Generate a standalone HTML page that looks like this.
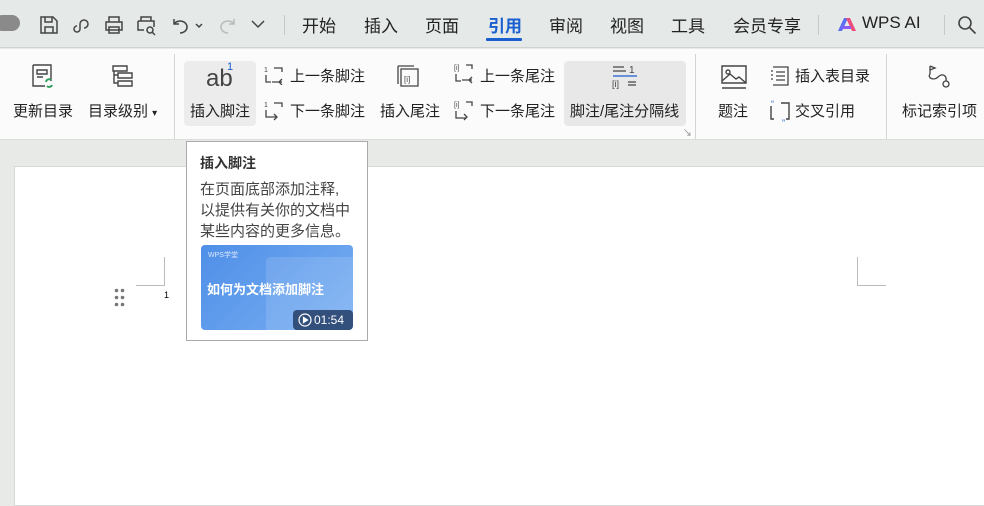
<!DOCTYPE html>
<html><head><meta charset="utf-8"><style>
*{margin:0;padding:0;box-sizing:border-box}
body{width:984px;height:499px;overflow:hidden;background:#e8eae7;font-family:"Liberation Sans","Noto Sans CJK SC",sans-serif;color:#222;position:relative}
.top{position:absolute;left:0;top:0;width:984px;height:48px;background:#e5e9e8;border-bottom:1px solid #cfd3d2}
.rib{position:absolute;left:0;top:49px;width:984px;height:91px;background:#fbfbfb;border-bottom:1px solid #dcdcdc}
.t{position:absolute;font-size:15px;white-space:nowrap}
.s{position:absolute;font-size:15px;white-space:nowrap;color:#222}
.ic{position:absolute}
.vl{position:absolute;width:1px;background:#d4d4d4}
.page{position:absolute;left:14px;top:166px;width:980px;height:340px;background:#fff;border:1px solid #d8d8d8}
</style></head><body>
<div class="top">
 <div style="position:absolute;left:-6px;top:15px;width:26px;height:16px;border-radius:8px;background:#8a8a8a"></div>
 <svg class="ic" style="left:38px;top:14px" width="22" height="22" fill="none" stroke="#444" stroke-width="1.5"><path d="M3 3h12l4 4v12H3z M7 3v5h7V3 M7 19v-6h8v6"/></svg>
 <svg class="ic" style="left:72px;top:14px" width="20" height="22" fill="none" stroke="#444" stroke-width="1.5"><path d="M8 10a4 4 0 1 1 4 4 M8 10v5a3 3 0 1 1-3-3"/></svg>
 <svg class="ic" style="left:103px;top:14px" width="22" height="22" fill="none" stroke="#444" stroke-width="1.5"><path d="M6 8V3h10v5 M3 8h16v8H3z M6 13h10v6H6z"/></svg>
 <svg class="ic" style="left:135px;top:14px" width="22" height="22" fill="none" stroke="#444" stroke-width="1.5"><path d="M6 7V3h10v4 M3 7h16v6 M3 7v9h6"/><circle cx="15" cy="16" r="3"/><path d="M17 18l3 3"/></svg>
 <svg class="ic" style="left:170px;top:14px" width="36" height="22" fill="none" stroke="#444" stroke-width="1.5"><path d="M4 5v5h5 M4 10a7 6 0 1 1 6 9"/><path d="M26 10l3 3 3-3"/></svg>
 <svg class="ic" style="left:218px;top:14px" width="22" height="22" fill="none" stroke="#bbb" stroke-width="1.5"><path d="M16 5v5h-5 M16 10a7 6 0 1 0-6 9"/></svg>
 <svg class="ic" style="left:250px;top:18px" width="16" height="12" fill="none" stroke="#444" stroke-width="1.5"><path d="M2 3l6 6 6-6"/></svg>
 <div class="vl" style="left:284px;top:15px;height:20px;background:#c8c8c8"></div>
 <div class="t" style="left:302px;top:12px;font-size:17px">开始</div>
 <div class="t" style="left:364px;top:12px;font-size:17px">插入</div>
 <div class="t" style="left:425px;top:12px;font-size:17px">页面</div>
 <div class="t" style="left:488px;top:12px;font-size:17px;color:#1a5fd0;font-weight:bold">引用</div>
 <div style="position:absolute;left:486px;top:38px;width:36px;height:3px;background:#1a5fd0;border-radius:1px"></div>
 <div class="t" style="left:549px;top:12px;font-size:17px">审阅</div>
 <div class="t" style="left:610px;top:12px;font-size:17px">视图</div>
 <div class="t" style="left:671px;top:12px;font-size:17px">工具</div>
 <div class="t" style="left:733px;top:12px;font-size:17px">会员专享</div>
 <div class="vl" style="left:818px;top:15px;height:20px;background:#c8c8c8"></div>
 <svg class="ic" style="left:837px;top:16px" width="20" height="16"><path d="M1 15L7 2h4L5 15z" fill="#5b6cf5"/><path d="M9 2h4l6 13h-4z" fill="#ef4d7b"/><path d="M6 10h8v3H5z" fill="#8a5cf0"/></svg>
 <div class="t" style="left:862px;top:13px;font-size:17px">WPS AI</div>
 <div class="vl" style="left:944px;top:15px;height:20px;background:#c8c8c8"></div>
 <svg class="ic" style="left:956px;top:14px" width="22" height="22" fill="none" stroke="#444" stroke-width="1.6"><circle cx="9" cy="9" r="6"/><path d="M13.5 13.5l6 6"/></svg>
</div>
<div class="rib">
 <svg class="ic" style="left:31px;top:14px" width="26" height="28" fill="none" stroke="#444" stroke-width="1.4"><path d="M2 2h18v16 M2 2v21h12"/><path d="M6 7h10v4H6z M6 14h6"/><path d="M15 19a3 3 0 0 1 5-2 M21 22a3 3 0 0 1-5 1" stroke="#2a9b5b" stroke-width="1.8"/></svg>
 <div class="s" style="left:13px;top:51px">更新目录</div>
 <svg class="ic" style="left:110px;top:15px" width="26" height="26" fill="none" stroke="#444" stroke-width="1.4"><path d="M3 2h14v5H3z M8 9h14v5H8z M8 17h14v5H8z M4 7v12h4 M4 11h4"/></svg>
 <div class="s" style="left:88px;top:51px">目录级别 <span style="font-size:10px">▾</span></div>
 <div class="vl" style="left:174px;top:5px;height:85px"></div>
 <div style="position:absolute;left:184px;top:12px;width:72px;height:65px;background:#ececec;border-radius:4px"></div>
 <div class="t" style="left:206px;top:16px;font-size:24px;color:#444">ab</div>
 <div class="t" style="left:227px;top:12px;font-size:11px;color:#1a5fd0">1</div>
 <div class="s" style="left:190px;top:51px">插入脚注</div>
 <svg class="ic" style="left:264px;top:16px" width="22" height="20" fill="none" stroke="#444" stroke-width="1.3"><path d="M2 10v7h5 M10 3h8v4 M18 14l-3 3 3 3 M8 17h10" /><text x="0" y="7" font-size="7" fill="#444" stroke="none">1</text></svg>
 <div class="s" style="left:290px;top:16px">上一条脚注</div>
 <svg class="ic" style="left:264px;top:51px" width="22" height="22" fill="none" stroke="#444" stroke-width="1.3"><path d="M2 10v7h10 M10 3h8v4 M10 14l3 3-3 3"/><text x="0" y="7" font-size="7" fill="#444" stroke="none">1</text></svg>
 <div class="s" style="left:290px;top:51px">下一条脚注</div>
 <svg class="ic" style="left:396px;top:15px" width="26" height="26" fill="none" stroke="#444" stroke-width="1.3"><path d="M2 2v18 M2 2h16"/><path d="M5 5h17v17H5z"/><text x="8" y="18" font-size="8" fill="#444" stroke="none">[i]</text></svg>
 <div class="s" style="left:380px;top:51px">插入尾注</div>
 <svg class="ic" style="left:454px;top:13px" width="24" height="24" fill="none" stroke="#444" stroke-width="1.3"><path d="M2 12v7h5 M12 3h6v4 M18 15l-3 3 3 3 M8 18h10"/><text x="0" y="8" font-size="7" fill="#444" stroke="none">[i]</text></svg>
 <div class="s" style="left:480px;top:16px">上一条尾注</div>
 <svg class="ic" style="left:454px;top:50px" width="24" height="24" fill="none" stroke="#444" stroke-width="1.3"><path d="M2 12v7h10 M12 3h6v4 M10 15l3 3-3 3"/><text x="0" y="8" font-size="7" fill="#444" stroke="none">[i]</text></svg>
 <div class="s" style="left:480px;top:51px">下一条尾注</div>
 <div style="position:absolute;left:564px;top:12px;width:122px;height:65px;background:#e8e8e8;border-radius:4px"></div>
 <svg class="ic" style="left:611px;top:14px" width="28" height="26"><path d="M2 4h11 M2 8h13" stroke="#444" stroke-width="1.3"/><text x="18" y="10" font-size="10" fill="#444">1</text><path d="M2 13h24" stroke="#1a5fd0" stroke-width="1.3"/><text x="1" y="24" font-size="9" fill="#444">[i]</text><path d="M17 19h8 M17 22h8" stroke="#444" stroke-width="1.3"/></svg>
 <div class="s" style="left:570px;top:51px">脚注/尾注分隔线</div>
 <div class="t" style="left:683px;top:77px;font-size:9px;color:#777">↘</div>
 <div class="vl" style="left:695px;top:5px;height:85px"></div>
 <svg class="ic" style="left:720px;top:15px" width="28" height="26" fill="none" stroke="#444" stroke-width="1.4"><path d="M2 2h24v17H2z M2 24h24"/><circle cx="8" cy="8" r="2"/><path d="M2 17l8-7 6 5 3-2 7 6"/></svg>
 <div class="s" style="left:718px;top:51px">题注</div>
 <svg class="ic" style="left:769px;top:16px" width="22" height="22" fill="none" stroke="#444" stroke-width="1.3"><path d="M4 2h15v18H4 M2 6h2 M2 10h2 M2 14h2 M7 7h9 M7 11h9 M7 15h9"/></svg>
 <div class="s" style="left:795px;top:16px">插入表目录</div>
 <svg class="ic" style="left:769px;top:51px" width="22" height="24" fill="none" stroke="#444" stroke-width="1.4"><path d="M2 6v13h3 M12 3h8v16h-3"/><text x="2" y="7" font-size="9" fill="#1a5fd0" stroke="none">“</text><text x="13" y="26" font-size="9" fill="#1a5fd0" stroke="none">”</text></svg>
 <div class="s" style="left:795px;top:51px">交叉引用</div>
 <div class="vl" style="left:886px;top:5px;height:85px"></div>
 <svg class="ic" style="left:926px;top:14px" width="28" height="28" fill="none" stroke="#444" stroke-width="1.3"><path d="M4 3v8 M4 3l5 2-5 2 M4 11c-3 4 4 7 8 3s9-2 8 4"/><circle cx="20" cy="21" r="3"/></svg>
 <div class="s" style="left:902px;top:51px">标记索引项</div>
</div>
<div class="page"></div>
<div style="position:absolute;left:164px;top:257px;width:1px;height:29px;background:#bbb"></div>
<div style="position:absolute;left:136px;top:285px;width:29px;height:1px;background:#bbb"></div>
<div style="position:absolute;left:857px;top:257px;width:1px;height:29px;background:#bbb"></div>
<div style="position:absolute;left:857px;top:285px;width:29px;height:1px;background:#bbb"></div>
<div class="t" style="left:164px;top:290px;font-size:9px;color:#000">1</div>
<svg class="ic" style="left:114px;top:288px" width="12" height="20" fill="#777"><circle cx="2.5" cy="2.5" r="1.8"/><circle cx="8.5" cy="2.5" r="1.8"/><circle cx="2.5" cy="9.5" r="1.8"/><circle cx="8.5" cy="9.5" r="1.8"/><circle cx="2.5" cy="16.5" r="1.8"/><circle cx="8.5" cy="16.5" r="1.8"/></svg>
<div style="position:absolute;left:186px;top:141px;width:182px;height:200px;background:#fff;border:1px solid #aaa"></div>
<div class="t" style="left:200px;top:153px;font-size:14px;font-weight:bold;color:#333">插入脚注</div>
<div class="t" style="left:200px;top:179px;font-size:15px;line-height:21px;color:#444">在页面底部添加注释,<br>以提供有关你的文档中<br>某些内容的更多信息。</div>
<div style="position:absolute;left:201px;top:245px;width:152px;height:85px;border-radius:4px;background:linear-gradient(135deg,#4f8fe8,#7ab0f2);overflow:hidden">
 <div style="position:absolute;left:65px;top:12px;width:90px;height:75px;background:rgba(255,255,255,0.12);border-radius:4px"></div>
 <div style="position:absolute;left:7px;top:5px;font-size:7px;color:#dce8fb">WPS学堂</div>
 <div style="position:absolute;left:6px;top:34px;font-size:13px;font-weight:bold;color:#fff">如何为文档添加脚注</div>
 <div style="position:absolute;left:92px;top:65px;width:60px;height:20px;background:#33507d;border-radius:4px;color:#fff;font-size:12px;line-height:20px;padding-left:21px">01:54</div>
 <svg style="position:absolute;left:97px;top:68px" width="14" height="14" fill="none" stroke="#fff" stroke-width="1.2"><circle cx="7" cy="7" r="6"/><path d="M5.5 4.5v5l4-2.5z" fill="#fff"/></svg>
</div>
</body></html>
